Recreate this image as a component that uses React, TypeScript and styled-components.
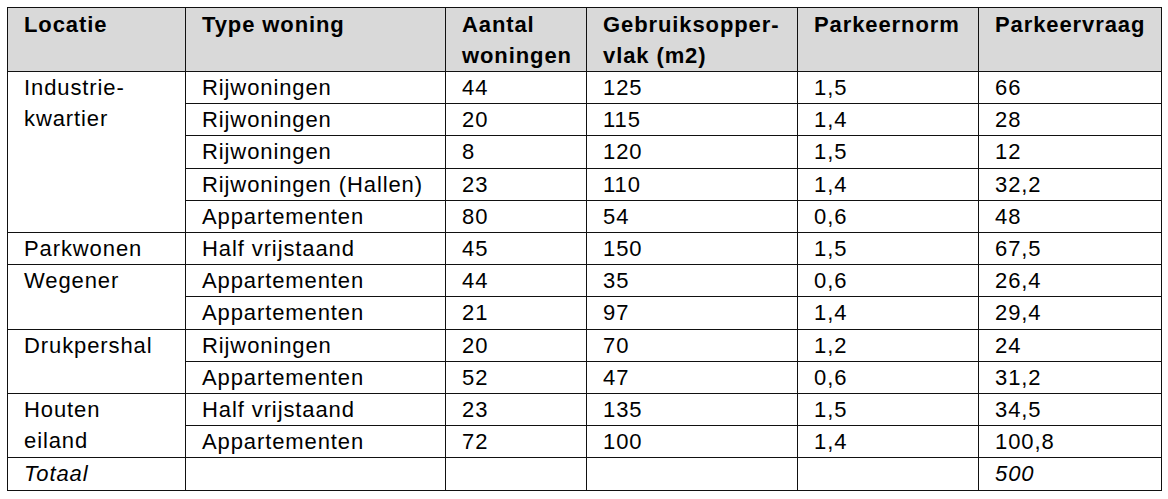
import styled, { createGlobalStyle } from "styled-components";

const GlobalStyle = createGlobalStyle`
  body {
    margin: 0;
    background: #ffffff;
    font-family: "Liberation Sans", Arial, sans-serif;
    color: #000;
  }
`;

const Page = styled.div`
  padding: 7px 0 0 7px;
`;

const Table = styled.table`
  border-collapse: collapse;
  table-layout: fixed;
  width: 1154px;
  font-size: 22px;
  letter-spacing: 0.9px;
`;

const HeadCell = styled.th`
  background: #d9d9d9;
  border: 1px solid #111;
  font-weight: 700;
  text-align: left;
  vertical-align: top;
  line-height: 31px;
  padding: 1px 6px 0 16px;
  height: 61px;
`;

const Cell = styled.td<{ $italic?: boolean }>`
  border: 1px solid #111;
  vertical-align: top;
  line-height: 31.2px;
  height: 31.2px;
  padding: 0 6px 0 16px;
  font-style: ${(p) => (p.$italic ? "italic" : "normal")};
  white-space: nowrap;
`;

const widths = [178, 260, 141, 211, 181, 183];

type Row = [string, string, string, string, string];

const groups: { name: string[]; rows: Row[] }[] = [
  {
    name: ["Industrie-", "kwartier"],
    rows: [
      ["Rijwoningen", "44", "125", "1,5", "66"],
      ["Rijwoningen", "20", "115", "1,4", "28"],
      ["Rijwoningen", "8", "120", "1,5", "12"],
      ["Rijwoningen (Hallen)", "23", "110", "1,4", "32,2"],
      ["Appartementen", "80", "54", "0,6", "48"],
    ],
  },
  {
    name: ["Parkwonen"],
    rows: [["Half vrijstaand", "45", "150", "1,5", "67,5"]],
  },
  {
    name: ["Wegener"],
    rows: [
      ["Appartementen", "44", "35", "0,6", "26,4"],
      ["Appartementen", "21", "97", "1,4", "29,4"],
    ],
  },
  {
    name: ["Drukpershal"],
    rows: [
      ["Rijwoningen", "20", "70", "1,2", "24"],
      ["Appartementen", "52", "47", "0,6", "31,2"],
    ],
  },
  {
    name: ["Houten", "eiland"],
    rows: [
      ["Half vrijstaand", "23", "135", "1,5", "34,5"],
      ["Appartementen", "72", "100", "1,4", "100,8"],
    ],
  },
];

const App = () => {
  return (
    <Page>
      <GlobalStyle />
      <Table>
        <colgroup>
          {widths.map((w, i) => (
            <col key={i} style={{ width: w }} />
          ))}
        </colgroup>
        <thead>
          <tr>
            <HeadCell>Locatie</HeadCell>
            <HeadCell>Type woning</HeadCell>
            <HeadCell>
              Aantal
              <br />
              woningen
            </HeadCell>
            <HeadCell>
              Gebruiksopper-
              <br />
              vlak (m2)
            </HeadCell>
            <HeadCell>Parkeernorm</HeadCell>
            <HeadCell>Parkeervraag</HeadCell>
          </tr>
        </thead>
        <tbody>
          {groups.map((g) =>
            g.rows.map((r, i) => (
              <tr key={g.name.join("") + i}>
                {i === 0 && (
                  <Cell rowSpan={g.rows.length}>
                    {g.name.map((n, j) => (
                      <div key={j}>{n}</div>
                    ))}
                  </Cell>
                )}
                {r.map((v, k) => (
                  <Cell key={k}>{v}</Cell>
                ))}
              </tr>
            ))
          )}
          <tr>
            <Cell $italic>Totaal</Cell>
            <Cell />
            <Cell />
            <Cell />
            <Cell />
            <Cell $italic>500</Cell>
          </tr>
        </tbody>
      </Table>
    </Page>
  );
};

export default App;
